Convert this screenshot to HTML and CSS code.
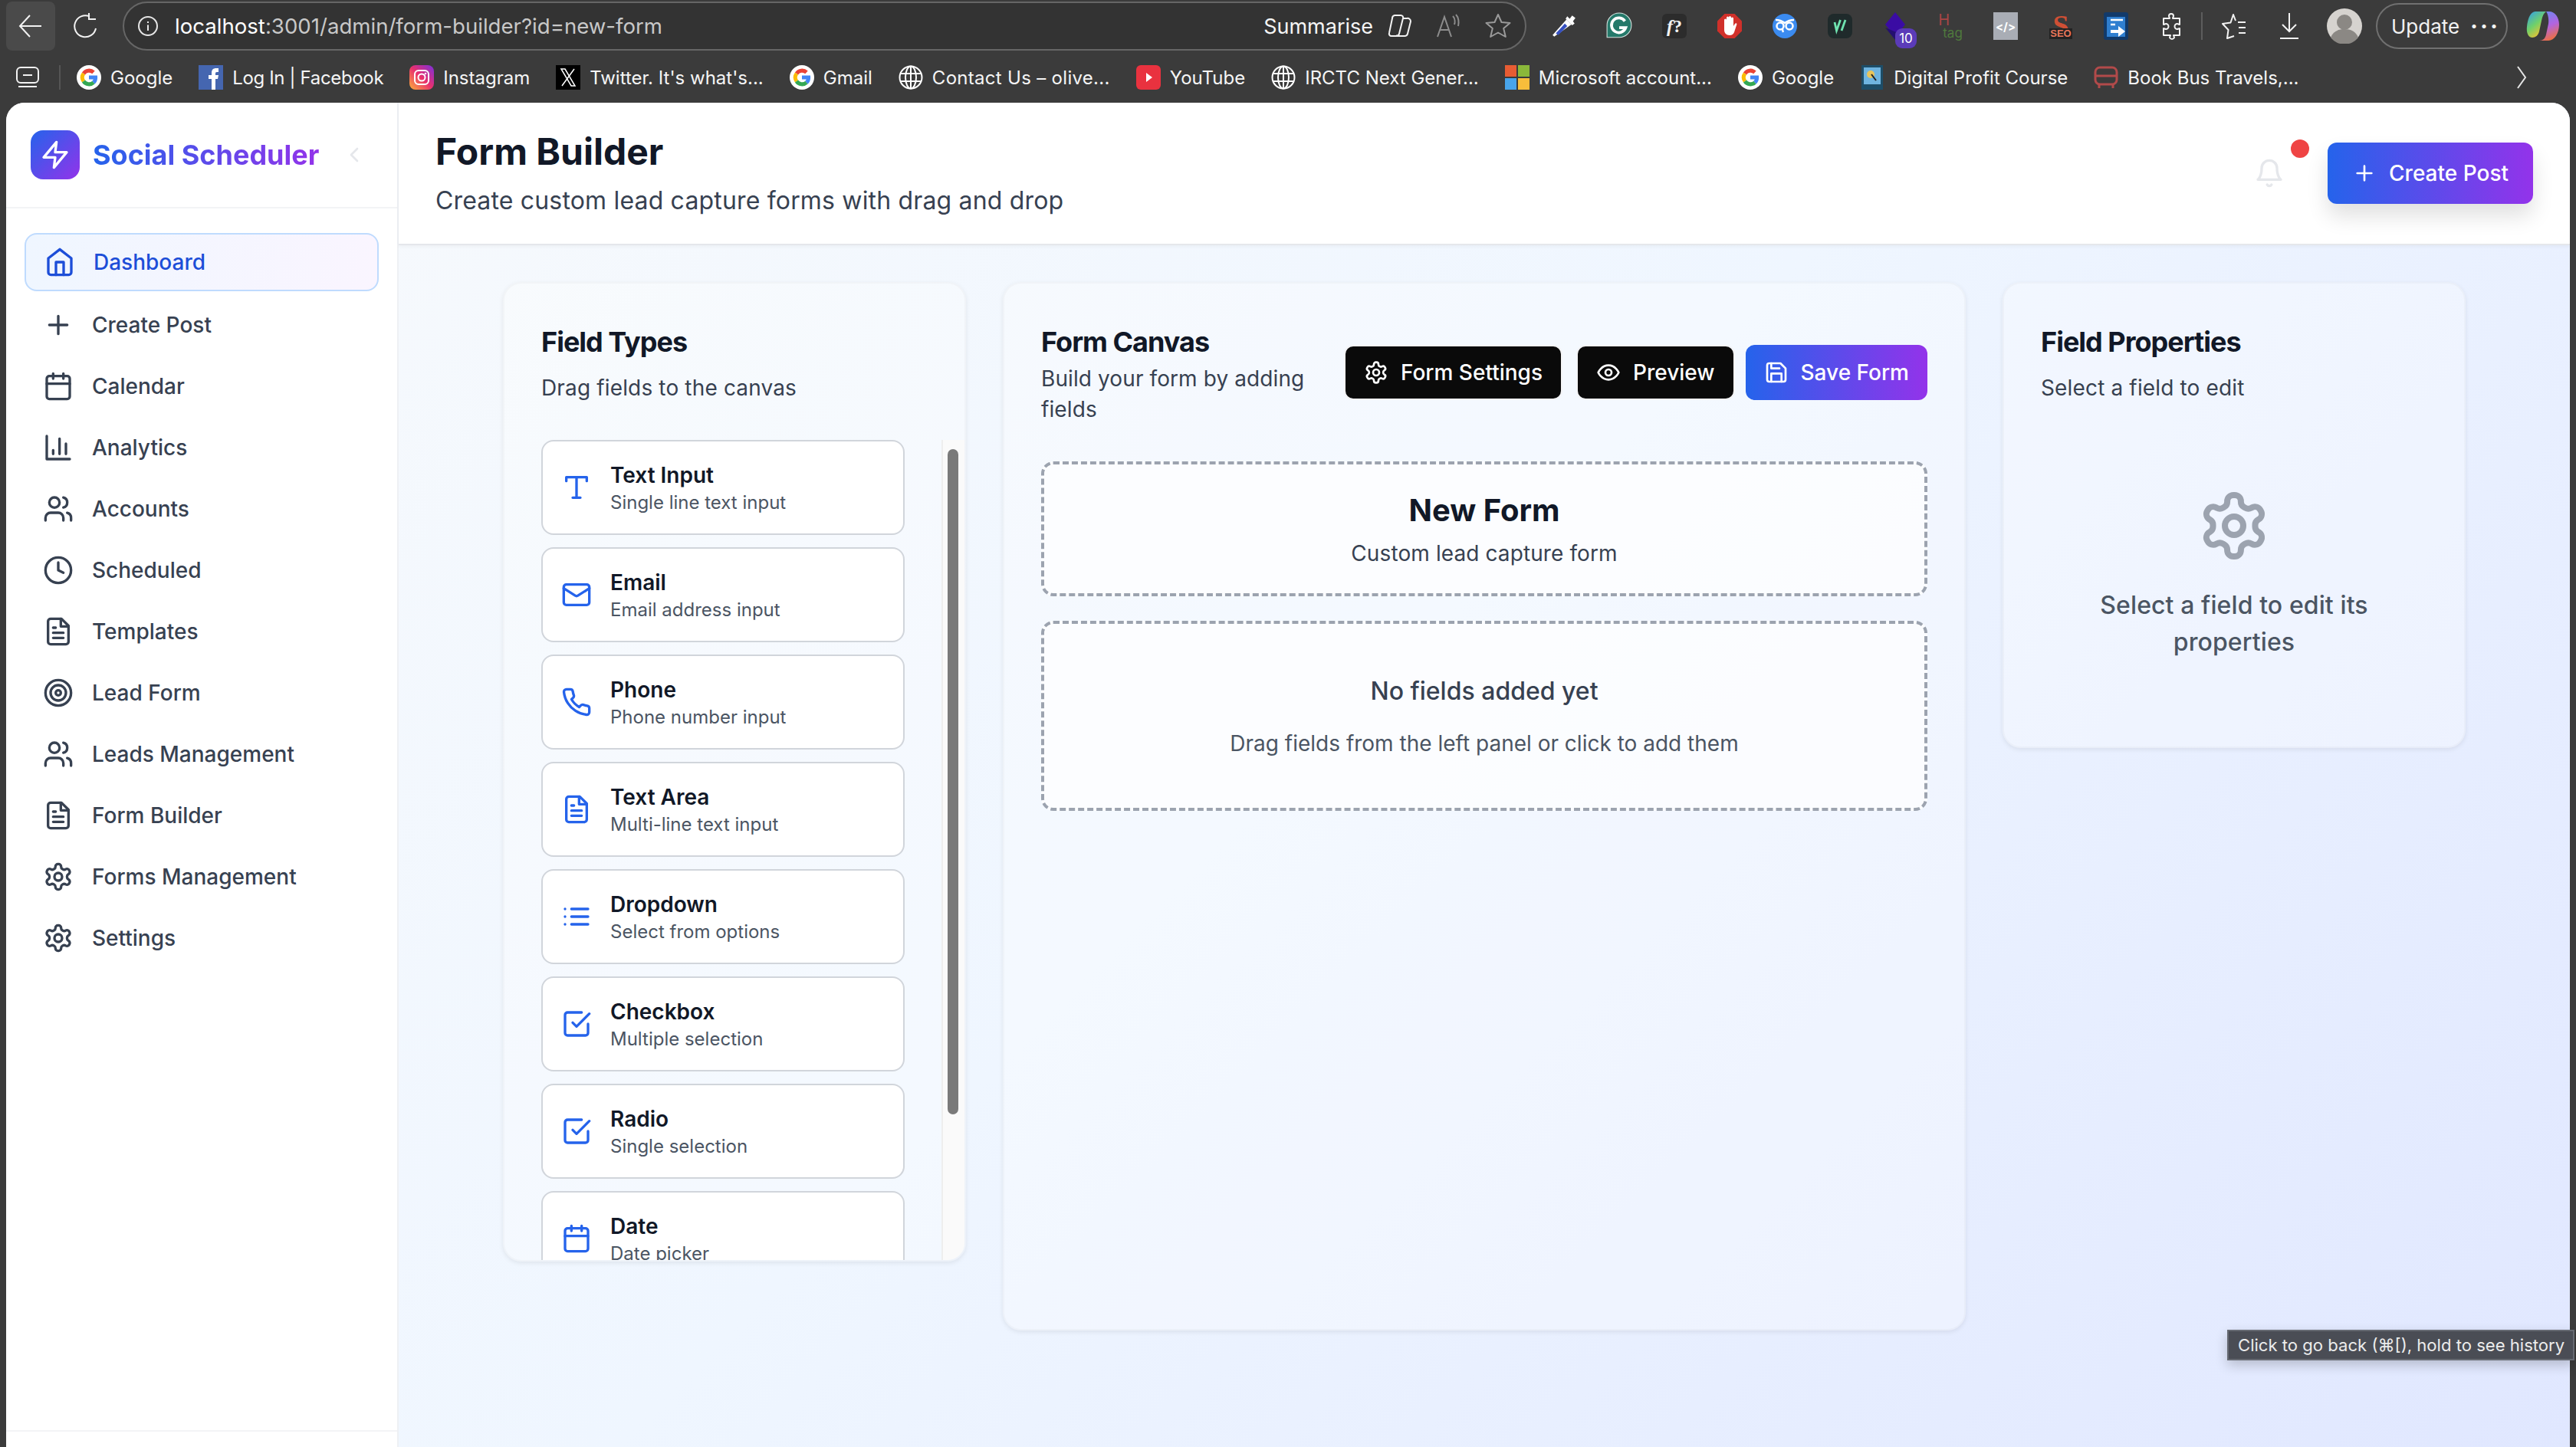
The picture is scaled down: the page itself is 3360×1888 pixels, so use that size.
FILE: index.html
```html
<!DOCTYPE html>
<html lang="en">
<head>
<meta charset="UTF-8">
<title>Form Builder</title>
<link rel="stylesheet" href="styles.css">
</head>
<body>

<svg class="sprite" xmlns="http://www.w3.org/2000/svg">
  <defs>
    <linearGradient id="copilot-a" x1="0" y1="0" x2=".6" y2="1"><stop offset="0" stop-color="#2f9cf0"/><stop offset=".55" stop-color="#6fd06a"/><stop offset="1" stop-color="#f2c230"/></linearGradient>
    <linearGradient id="copilot-b" x1=".3" y1="0" x2=".6" y2="1"><stop offset="0" stop-color="#6f86f0"/><stop offset=".5" stop-color="#b264e0"/><stop offset="1" stop-color="#f0703a"/></linearGradient>
    <linearGradient id="insta" x1="0" y1="1" x2="1" y2="0"><stop offset="0" stop-color="#fdb03a"/><stop offset=".5" stop-color="#e8306e"/><stop offset="1" stop-color="#7a2fe0"/></linearGradient>
  </defs>
  <symbol id="i-home" viewBox="0 0 24 24"><path d="m3 9 9-7 9 7v11a2 2 0 0 1-2 2H5a2 2 0 0 1-2-2z"/><polyline points="9 22 9 12 15 12 15 22"/></symbol>
  <symbol id="i-plus" viewBox="0 0 24 24"><path d="M5 12h14M12 5v14"/></symbol>
  <symbol id="i-calendar" viewBox="0 0 24 24"><rect x="3" y="4" width="18" height="18" rx="2"/><path d="M16 2v4M8 2v4M3 10h18"/></symbol>
  <symbol id="i-chart" viewBox="0 0 24 24"><path d="M3 3v18h18M18 17V9M13 17V5M8 17v-3"/></symbol>
  <symbol id="i-users" viewBox="0 0 24 24"><path d="M16 21v-2a4 4 0 0 0-4-4H6a4 4 0 0 0-4 4v2"/><circle cx="9" cy="7" r="4"/><path d="M22 21v-2a4 4 0 0 0-3-3.87M16 3.13a4 4 0 0 1 0 7.75"/></symbol>
  <symbol id="i-clock" viewBox="0 0 24 24"><circle cx="12" cy="12" r="10"/><polyline points="12 6 12 12 16 14"/></symbol>
  <symbol id="i-file" viewBox="0 0 24 24"><path d="M14.5 2H6a2 2 0 0 0-2 2v16a2 2 0 0 0 2 2h12a2 2 0 0 0 2-2V7.5L14.5 2z"/><polyline points="14 2 14 8 20 8"/><path d="M16 13H8M16 17H8M10 9H8"/></symbol>
  <symbol id="i-target" viewBox="0 0 24 24"><circle cx="12" cy="12" r="10"/><circle cx="12" cy="12" r="6"/><circle cx="12" cy="12" r="2"/></symbol>
  <symbol id="i-gear" viewBox="0 0 24 24"><path d="M12.22 2h-.44a2 2 0 0 0-2 2v.18a2 2 0 0 1-1 1.73l-.43.25a2 2 0 0 1-2 0l-.15-.08a2 2 0 0 0-2.73.73l-.22.38a2 2 0 0 0 .73 2.73l.15.1a2 2 0 0 1 1 1.72v.51a2 2 0 0 1-1 1.74l-.15.09a2 2 0 0 0-.73 2.73l.22.38a2 2 0 0 0 2.73.73l.15-.08a2 2 0 0 1 2 0l.43.25a2 2 0 0 1 1 1.73V20a2 2 0 0 0 2 2h.44a2 2 0 0 0 2-2v-.18a2 2 0 0 1 1-1.73l.43-.25a2 2 0 0 1 2 0l.15.08a2 2 0 0 0 2.73-.73l.22-.39a2 2 0 0 0-.73-2.73l-.15-.08a2 2 0 0 1-1-1.74v-.5a2 2 0 0 1 1-1.74l.15-.09a2 2 0 0 0 .73-2.73l-.22-.38a2 2 0 0 0-2.73-.73l-.15.08a2 2 0 0 1-2 0l-.43-.25a2 2 0 0 1-1-1.73V4a2 2 0 0 0-2-2z"/><circle cx="12" cy="12" r="3"/></symbol>
  <symbol id="i-type" viewBox="0 0 24 24"><path d="M4 7V4h16v3M9 20h6M12 4v16"/></symbol>
  <symbol id="i-mail" viewBox="0 0 24 24"><rect x="2" y="4" width="20" height="16" rx="2"/><path d="m22 7-8.97 5.7a1.94 1.94 0 0 1-2.06 0L2 7"/></symbol>
  <symbol id="i-phone" viewBox="0 0 24 24"><path d="M22 16.92v3a2 2 0 0 1-2.18 2 19.79 19.79 0 0 1-8.63-3.07 19.5 19.5 0 0 1-6-6 19.79 19.79 0 0 1-3.07-8.67A2 2 0 0 1 4.11 2h3a2 2 0 0 1 2 1.72 12.84 12.84 0 0 0 .7 2.81 2 2 0 0 1-.45 2.11L8.09 9.91a16 16 0 0 0 6 6l1.27-1.27a2 2 0 0 1 2.11-.45 12.84 12.84 0 0 0 2.81.7A2 2 0 0 1 22 16.92z"/></symbol>
  <symbol id="i-list" viewBox="0 0 24 24"><path d="M8 6h13M8 12h13M8 18h13M3 6h.01M3 12h.01M3 18h.01"/></symbol>
  <symbol id="i-check" viewBox="0 0 24 24"><polyline points="9 11 12 14 22 4"/><path d="M21 12v7a2 2 0 0 1-2 2H5a2 2 0 0 1-2-2V5a2 2 0 0 1 2-2h11"/></symbol>
  <symbol id="i-eye" viewBox="0 0 24 24"><path d="M2 12s3-7 10-7 10 7 10 7-3 7-10 7-10-7-10-7Z"/><circle cx="12" cy="12" r="3"/></symbol>
  <symbol id="i-save" viewBox="0 0 24 24"><path d="M19 21H5a2 2 0 0 1-2-2V5a2 2 0 0 1 2-2h11l5 5v11a2 2 0 0 1-2 2z"/><polyline points="17 21 17 13 7 13 7 21"/><polyline points="7 3 7 8 15 8"/></symbol>
  <symbol id="i-bell" viewBox="0 0 24 24"><path d="M6 8a6 6 0 0 1 12 0c0 7 3 9 3 9H3s3-2 3-9"/><path d="M10.3 21a1.94 1.94 0 0 0 3.4 0"/></symbol>
  <symbol id="i-zap" viewBox="0 0 24 24"><polygon points="13 2 3 14 12 14 11 22 21 10 12 10 13 2"/></symbol>
  <symbol id="i-chevron" viewBox="0 0 24 24"><path d="m15 18-6-6 6-6"/></symbol>

  <symbol id="fav-google" viewBox="0 0 32 32">
    <circle cx="16" cy="16" r="16" fill="#fff"/>
    <g fill="none" stroke-width="5">
      <path stroke="#ea4335" d="M9 11a8.6 8.6 0 0 1 13-1.6"/>
      <path stroke="#fbbc05" d="M9 11a8.6 8.6 0 0 0 0 10"/>
      <path stroke="#34a853" d="M9 21a8.6 8.6 0 0 0 13 1.6"/>
      <path stroke="#4285f4" d="M22 22.6a8.6 8.6 0 0 0 2.6-6.6H16"/>
    </g>
  </symbol>
  <symbol id="fav-globe" viewBox="0 0 32 32">
    <g fill="none" stroke="#fff" stroke-width="2">
      <circle cx="16" cy="16" r="14.5"/><ellipse cx="16" cy="16" rx="7" ry="14.5"/>
      <path d="M16 1.5v29M2 11h28M2 21h28"/>
    </g>
  </symbol>
</svg>

<header class="chrome">
  <div class="toolbar">
    <button class="back-btn" type="button">
      <svg width="36" height="36" viewBox="0 0 36 36" fill="none" stroke="#f2f2f2" stroke-width="2"><path d="M32 18H4M17 4 4 18l13 14"/></svg>
    </button>
    <div class="reload">
      <svg width="34" height="36" viewBox="0 0 34 36" fill="none" stroke="#f2f2f2" stroke-width="2"><path d="M30 21A14 14 0 1 1 22 5.500"/><path d="M21 1v8h9"/></svg>
    </div>
    <div class="address">
      <svg class="addr-info" width="26" height="26" viewBox="0 0 26 26" fill="none" stroke="#e6e6e6" stroke-width="2"><circle cx="13" cy="13" r="12"/><path d="M13 11.500V19M13 7v2"/></svg>
      <span class="url"><b>localhost</b>:3001/admin/form-builder?id=new-form</span>
      <span class="summarise">Summarise</span>
      <svg class="addr-ico" width="32" height="32" viewBox="0 0 32 32" fill="none" stroke="#f2f2f2" stroke-width="2" stroke-linejoin="round"><path d="M9 2h8a3 3 0 0 1 3 4l-5 20a4 4 0 0 1-4 3H5a3 3 0 0 1-3-4L6 6a4 4 0 0 1 3-4z"/><path d="M20 6h5a4 4 0 0 1 5 4l-4 16a4 4 0 0 1-4 3h-8a4 4 0 0 1-3-1"/></svg>
      <svg class="addr-ico addr-read" width="32" height="32" viewBox="0 0 32 32" fill="none" stroke="#8d8d8d" stroke-width="2"><path d="M2 30 11 4l9 26M5 21h12"/><path d="M22 3c3 3 3 8 2 11M26 1c4 4 4 11 3 15"/></svg>
      <svg class="addr-ico addr-star" width="34" height="34" viewBox="0 0 34 34" fill="none" stroke="#9a9a9a" stroke-width="2" stroke-linejoin="round"><path d="m17 2 4.500 10 11 1-8.300 7 2.600 11L17 25.500 7.200 31l2.600-11-8.300-7 11-1z"/></svg>
    </div>

    <div class="extensions">
      <div class="ext"><svg width="34" height="34" viewBox="0 0 32 32"><path d="M4 29 2 27 19 8l6 6z" fill="#fff"/><path d="M6 25 17 13l3 3L9 27z" fill="#3550c0"/><path d="m20 4 3 3 3-4 4 3-3 4 2 3-3 2-8-8z" fill="#fff"/></svg></div>
      <div class="ext"><svg width="34" height="36" viewBox="0 0 32 34"><path d="M16 1a15 15 0 0 1 0 30H1V16A15 15 0 0 1 16 1z" fill="#25796a" stroke="#d8e6e2"/><path d="M23 11a9 9 0 1 0 1 8h-8" fill="none" stroke="#fff" stroke-width="3.500"/></svg></div>
      <div class="ext"><span class="ext-f"><i>f</i>?</span></div>
      <div class="ext"><svg width="32" height="34" viewBox="0 0 32 32"><path d="M9.500 0h13L32 9.500v13L22.500 32h-13L0 22.500v-13z" fill="#d0302a"/><path d="M9 15V8a1.500 1.500 0 0 1 3 0V5a1.500 1.500 0 0 1 3 0V4.500a1.500 1.500 0 0 1 3 0V6a1.500 1.500 0 0 1 3 0v10l2-3c1-1.500 3-.5 2.300 1L22 24c-1 2.500-3 4-6 4-4.500 0-7-3-7-7z" fill="#fff"/></svg></div>
      <div class="ext"><svg width="32" height="34" viewBox="0 0 32 32"><circle cx="16" cy="16" r="16" fill="#3b8bf0"/><g fill="none" stroke="#fff" stroke-width="2.500"><circle cx="10" cy="16" r="4.500"/><circle cx="22" cy="16" r="4.500"/><path d="M4 8c4 0 8 1 12 4 4-3 8-4 12-4M14 24c-1-2-1-3-1-4"/></g></svg></div>
      <div class="ext"><svg width="32" height="32" viewBox="0 0 32 32"><rect width="32" height="32" rx="8" fill="#1f2a2b"/><path d="m9 11 2.500 11 5-14M18 22l5-14" fill="none" stroke="#6fe3b0" stroke-width="2.800"/></svg></div>
      <div class="ext">
        <svg width="32" height="36" viewBox="0 0 32 36"><path d="m16 0 13 16-13 16L3 16z" fill="#3a0ca3"/><path d="m3 20 13 16 6-8z" fill="#241070"/></svg>
        <span class="badge">10</span>
      </div>
      <div class="ext"><span class="ext-htag"><u>H</u><em>tag</em></span></div>
      <div class="ext"><span class="ext-code">&lt;/&gt;</span></div>
      <div class="ext"><span class="ext-seo"><u>S</u><small>SEO</small></span></div>
      <div class="ext"><svg width="32" height="36" viewBox="0 0 32 36"><rect width="32" height="36" rx="3" fill="#123a6a"/><rect x="4" y="6" width="24" height="26" fill="#2f7fd0"/><path d="M9 10h16M9 16h6" stroke="#fff" stroke-width="2.500"/><path d="M9 23h10v-5l9 7-9 7v-5H9z" fill="#fff"/></svg></div>
      <div class="ext"><svg width="32" height="38" viewBox="0 0 32 38" fill="none" stroke="#f2f2f2" stroke-width="2" stroke-linejoin="round"><path d="M13 6a3 3 0 0 1 6 0c0 1-1 2-1 3h9v8c-1 0-2-1-3-1a3.500 3.500 0 0 0 0 7c1 0 2-1 3-1v9h-8c0 1 1 1.500 1 3a3.200 3.200 0 0 1-6 0c0-1.500 1-2 1-3H6v-9c1 0 2 1 3 1a3.500 3.500 0 0 0 0-7c-1 0-2 1-3 1V9h8c0-1-1-2-1-3z"/></svg></div>
      <span class="ext-divider"></span>
      <div class="ext"><svg width="34" height="34" viewBox="0 0 34 34" fill="none" stroke="#f2f2f2" stroke-width="2" stroke-linejoin="round"><path d="M17 30 8 33l1.500-11L2 14l10.500-1.500L16 2l3 8"/><path d="M22 12h10M23 19h9M23 26h9"/></svg></div>
      <div class="ext"><svg width="26" height="36" viewBox="0 0 26 36" fill="none" stroke="#f2f2f2" stroke-width="2"><path d="M13 1v24M4 16l9 9 9-9M1 34h24"/></svg></div>
      <div class="ext"><svg width="46" height="46" viewBox="0 0 46 46"><circle cx="23" cy="23" r="23" fill="#d6d3cf"/><circle cx="23" cy="18" r="10" fill="#8b8884"/><path d="M5 38c3-8 10-11 18-11s15 3 18 11a23 23 0 0 1-36 0z" fill="#8b8884"/></svg></div>
      <div class="update-pill"><span>Update</span><span class="dots">&middot;&middot;&middot;</span></div>
      <div class="ext ext-copilot"><svg width="44" height="42" viewBox="0 0 44 40"><path d="M26 1h4c7 0 13 7 13 17 0 11-6 21-14 21H17c5 0 8-3 9-8l3-14c1-6-1-14-3-16z" fill="url(#copilot-b)"/><path d="M12 1h14c-3 2-5 6-6 12l-3 14c-1 5-5 8-9 8-5 0-8-6-7-14C2 10 6 1 12 1z" fill="url(#copilot-a)"/></svg></div>
    </div>
  </div>

  <div class="bookmarks">
    <svg class="bm-all" width="32" height="30" viewBox="0 0 32 30" fill="none" stroke="#f2f2f2" stroke-width="2"><rect x="2" y="2" width="28" height="20" rx="5"/><path d="M10 12h12M4 27h24"/></svg>
    <span class="bm-divider"></span>
    <a class="bm"><svg class="bm-ico"><use href="#fav-google"/></svg>Google</a>
    <a class="bm bm-tight"><svg class="bm-ico" viewBox="0 0 32 32"><rect width="32" height="32" fill="#4566b0"/><path d="M17 32V18h-4v-5h4v-3c0-4 2-6 6-6h3v5h-2c-2 0-2 1-2 2v2h4l-1 5h-3v14z" fill="#fff"/></svg>Log In | Facebook</a>
    <a class="bm"><svg class="bm-ico" viewBox="0 0 32 32"><rect width="32" height="32" rx="8" fill="url(#insta)"/><rect x="7" y="7" width="18" height="18" rx="5" fill="none" stroke="#fff" stroke-width="2"/><circle cx="16" cy="16" r="4.500" fill="none" stroke="#fff" stroke-width="2"/><circle cx="21" cy="11" r="1.300" fill="#fff"/></svg>Instagram</a>
    <a class="bm"><svg class="bm-ico" viewBox="0 0 32 32"><rect width="32" height="32" fill="#000"/><path d="M7 5h5l13 22h-5zM24 5 8 27" fill="none" stroke="#fff" stroke-width="1.500"/></svg>Twitter. It's what's...</a>
    <a class="bm"><svg class="bm-ico"><use href="#fav-google"/></svg>Gmail</a>
    <a class="bm bm-loose"><svg class="bm-ico"><use href="#fav-globe"/></svg>Contact Us – olive...</a>
    <a class="bm"><svg class="bm-ico" viewBox="0 0 32 32"><rect width="32" height="32" rx="6" fill="#e9323f"/><path d="m13 10 8 6-8 6z" fill="#fff"/></svg>YouTube</a>
    <a class="bm"><svg class="bm-ico"><use href="#fav-globe"/></svg>IRCTC Next Gener...</a>
    <a class="bm"><svg class="bm-ico" viewBox="0 0 32 32"><rect width="15" height="15" fill="#e75c33"/><rect x="17" width="15" height="15" fill="#8ab83a"/><rect y="17" width="15" height="15" fill="#48a4ea"/><rect x="17" y="17" width="15" height="15" fill="#f8bd3b"/></svg>Microsoft account...</a>
    <a class="bm"><svg class="bm-ico"><use href="#fav-google"/></svg>Google</a>
    <a class="bm"><svg class="bm-ico" viewBox="0 0 32 32"><rect x="2" width="28" height="32" fill="#1d4d68"/><rect x="5" y="3" width="22" height="22" fill="#6fb4e0"/><circle cx="14" cy="12" r="5" fill="#e8c45a"/><path d="M15 12l6 8" stroke="#222" stroke-width="2"/></svg>Digital Profit Course</a>
    <a class="bm"><svg class="bm-ico" viewBox="0 0 32 32" fill="none" stroke="#b24a4a" stroke-width="3"><rect x="2" y="3" width="28" height="22" rx="6"/><path d="M2 14h28M7 25v5M25 25v5"/></svg>Book Bus Travels,...</a>
    <svg class="bm-more" width="14" height="32" viewBox="0 0 14 32" fill="none" stroke="#e6e6e6" stroke-width="2"><path d="m2 2 10 14L2 30"/></svg>
  </div>
</header>

<div class="window">
  <aside class="sidebar">
    <div class="sidebar-head">
      <div class="logo"><svg class="icon logo-zap"><use href="#i-zap"/></svg></div>
      <span class="brand">Social Scheduler</span>
      <svg class="icon collapse"><use href="#i-chevron"/></svg>
    </div>
    <nav class="nav">
      <a class="nav-item active"><svg class="icon"><use href="#i-home"/></svg>Dashboard</a>
      <a class="nav-item"><svg class="icon"><use href="#i-plus"/></svg>Create Post</a>
      <a class="nav-item"><svg class="icon"><use href="#i-calendar"/></svg>Calendar</a>
      <a class="nav-item"><svg class="icon"><use href="#i-chart"/></svg>Analytics</a>
      <a class="nav-item"><svg class="icon"><use href="#i-users"/></svg>Accounts</a>
      <a class="nav-item"><svg class="icon"><use href="#i-clock"/></svg>Scheduled</a>
      <a class="nav-item"><svg class="icon"><use href="#i-file"/></svg>Templates</a>
      <a class="nav-item"><svg class="icon"><use href="#i-target"/></svg>Lead Form</a>
      <a class="nav-item"><svg class="icon"><use href="#i-users"/></svg>Leads Management</a>
      <a class="nav-item"><svg class="icon"><use href="#i-file"/></svg>Form Builder</a>
      <a class="nav-item"><svg class="icon"><use href="#i-gear"/></svg>Forms Management</a>
      <a class="nav-item"><svg class="icon"><use href="#i-gear"/></svg>Settings</a>
    </nav>
    <div class="sidebar-foot"></div>
  </aside>

  <main class="main">
    <div class="page-head">
      <div>
        <h1>Form Builder</h1>
        <p>Create custom lead capture forms with drag and drop</p>
      </div>
      <div class="head-actions">
        <div class="bell">
          <svg class="icon"><use href="#i-bell"/></svg>
          <span class="bell-dot"></span>
        </div>
        <button class="btn btn-create" type="button"><svg class="icon btn-ico"><use href="#i-plus"/></svg>Create Post</button>
      </div>
    </div>

    <div class="content">
      <section class="card card-types">
        <h2>Field Types</h2>
        <p class="card-sub">Drag fields to the canvas</p>
        <div class="field-wrap">
          <div class="field-list">
            <div class="field"><svg class="icon"><use href="#i-type"/></svg><div><strong>Text Input</strong><span>Single line text input</span></div></div>
            <div class="field"><svg class="icon"><use href="#i-mail"/></svg><div><strong>Email</strong><span>Email address input</span></div></div>
            <div class="field"><svg class="icon"><use href="#i-phone"/></svg><div><strong>Phone</strong><span>Phone number input</span></div></div>
            <div class="field"><svg class="icon"><use href="#i-file"/></svg><div><strong>Text Area</strong><span>Multi-line text input</span></div></div>
            <div class="field"><svg class="icon"><use href="#i-list"/></svg><div><strong>Dropdown</strong><span>Select from options</span></div></div>
            <div class="field"><svg class="icon"><use href="#i-check"/></svg><div><strong>Checkbox</strong><span>Multiple selection</span></div></div>
            <div class="field"><svg class="icon"><use href="#i-check"/></svg><div><strong>Radio</strong><span>Single selection</span></div></div>
            <div class="field"><svg class="icon"><use href="#i-calendar"/></svg><div><strong>Date</strong><span>Date picker</span></div></div>
          </div>
          <div class="scrollbar"><div class="thumb"></div></div>
        </div>
      </section>

      <section class="card card-canvas">
        <div class="canvas-head">
          <div class="canvas-title">
            <h2>Form Canvas</h2>
            <p>Build your form by adding fields</p>
          </div>
          <div class="canvas-actions">
            <button class="btn btn-dark" type="button"><svg class="icon btn-ico"><use href="#i-gear"/></svg>Form Settings</button>
            <button class="btn btn-dark" type="button"><svg class="icon btn-ico"><use href="#i-eye"/></svg>Preview</button>
            <button class="btn btn-save" type="button"><svg class="icon btn-ico"><use href="#i-save"/></svg>Save Form</button>
          </div>
        </div>
        <div class="dashed form-head">
          <h3>New Form</h3>
          <p>Custom lead capture form</p>
        </div>
        <div class="dashed drop-zone">
          <h4>No fields added yet</h4>
          <p>Drag fields from the left panel or click to add them</p>
        </div>
      </section>

      <section class="card card-props">
        <h2>Field Properties</h2>
        <p class="card-sub">Select a field to edit</p>
        <div class="props-empty">
          <svg class="icon"><use href="#i-gear"/></svg>
          <p>Select a field to edit its properties</p>
        </div>
      </section>
    </div>
  </main>
</div>

<div class="tooltip">Click to go back (⌘[), hold to see history</div>

</body>
</html>
```

FILE: styles.css
```css
* {
	box-sizing: border-box;
}
html, body {
	margin: 0;
	height: 1888px;
	overflow: hidden;
}
body {
	display: flex;
	flex-direction: column;
	background: #3b3b3b;
	font-family: Inter, "Noto Sans", sans-serif;
	color: #111827;
}
h1, h2, h3, h4, p {
	margin: 0;
}
.sprite {
	position: absolute;
	width: 0;
	height: 0;
}
.icon {
	width: 40px;
	height: 40px;
	flex: none;
	fill: none;
	stroke: currentColor;
	stroke-width: 2;
	stroke-linecap: round;
	stroke-linejoin: round;
}

/* browser bars */
.chrome {
	height: 134px;
	flex: none;
	color: #f2f2f2;
}
.toolbar {
	display: flex;
	align-items: center;
	height: 68px;
	padding: 2px 0 2px 8px;
}
.back-btn {
	display: flex;
	align-items: center;
	justify-content: center;
	width: 64px;
	height: 64px;
	padding: 0;
	border: 0;
	border-radius: 8px;
	background: #4a4a4a;
}
.reload {
	display: flex;
	justify-content: center;
	width: 80px;
	margin-right: 8px;
}
.address {
	display: flex;
	align-items: center;
	width: 1831px;
	height: 64px;
	padding: 0 18px 0 18px;
	border: 2px solid #666;
	border-radius: 32px;
	background: #333;
}
.addr-info {
	margin-right: 22px;
}
.url {
	font-size: 27.6px;
	color: #c8c8c8;
	white-space: nowrap;
}
.url b {
	font-weight: 400;
	color: #fff;
}
.summarise {
	margin-left: auto;
	font-size: 27px;
	color: #f5f5f5;
}
.addr-ico {
	margin-left: 19px;
}
.addr-read {
	margin-left: 31px;
}
.addr-star {
	margin-left: 32px;
}
.extensions {
	display: flex;
	align-items: center;
	margin-left: 13px;
}
.ext {
	position: relative;
	display: flex;
	align-items: center;
	justify-content: center;
	width: 72px;
	height: 60px;
}
.ext-f {
	display: flex;
	align-items: center;
	justify-content: center;
	width: 32px;
	height: 32px;
	border-radius: 6px;
	background: #2c2c2c;
	font: 700 24px "Liberation Serif", serif;
}
.ext-htag {
	display: flex;
	flex-direction: column;
}
.ext-htag u {
	font-size: 20px;
	line-height: 18px;
	text-decoration: none;
	color: #a84545;
}
.ext-htag em {
	margin-left: 6px;
	font-style: normal;
	font-size: 17px;
	line-height: 16px;
	color: #4f7a3d;
}
.ext-code {
	display: flex;
	align-items: center;
	justify-content: center;
	width: 32px;
	height: 36px;
	background: #a9adb5;
	color: #fff;
	font-size: 15px;
	font-weight: 700;
}
.ext-seo {
	display: flex;
	flex-direction: column;
	align-items: center;
}
.ext-seo u {
	height: 20px;
	font: 700 38px/32px "Liberation Serif", serif;
	text-decoration: none;
	color: #cf4f34;
}
.ext-seo small {
	padding: 0 1px;
	background: #222;
	color: #e8765a;
	font: 700 13px/14px "Liberation Sans", sans-serif;
}
.badge {
	position: absolute;
	left: 36px;
	top: 33px;
	width: 28px;
	height: 26px;
	border-radius: 9px;
	background: #5b3bb8;
	color: #fff;
	font-size: 17px;
	line-height: 26px;
	text-align: center;
}
.ext-divider {
	width: 2px;
	height: 36px;
	margin: 0 5px 0 3px;
	background: #5d5d5d;
}
.update-pill {
	display: flex;
	align-items: center;
	justify-content: space-between;
	width: 172px;
	height: 60px;
	margin-left: 5px;
	padding: 0 8px 0 18px;
	border: 2px solid #707070;
	border-radius: 30px;
	font-size: 26px;
}
.dots {
	font-size: 30px;
	font-weight: 700;
	letter-spacing: 3px;
}
.ext-copilot {
	margin-left: 10px;
}
.bookmarks {
	display: flex;
	align-items: center;
	gap: 34px;
	height: 66px;
	padding: 0 64px 0 20px;
}
.bm-divider {
	width: 2px;
	height: 32px;
	margin: 0 -13px 0 -9px;
	background: #555;
}
.bm {
	display: flex;
	align-items: center;
	gap: 12px;
	font-size: 24px;
	white-space: nowrap;
	color: #f5f5f5;
}
.bm-tight {
	letter-spacing: -.35px;
}
.bm-loose {
	letter-spacing: .3px;
}
.bm-ico {
	width: 32px;
	height: 32px;
	flex: none;
}
.bm-more {
	margin-left: auto;
}

/* app window */
.window {
	display: flex;
	flex: 1;
	min-height: 0;
	margin: 0 8px;
	border-radius: 24px 24px 0 0;
	overflow: hidden;
	background: linear-gradient(135deg, #f8fafc 0%, #eff6ff 50%, #e0e7ff 100%);
}
.sidebar {
	display: flex;
	flex-direction: column;
	width: 512px;
	flex: none;
	border-right: 2px solid #eef0f4;
	background: #fff;
}
.sidebar-head {
	display: flex;
	align-items: center;
	height: 138px;
	padding: 0 32px;
	border-bottom: 2px solid #f3f4f6;
}
.logo {
	display: flex;
	align-items: center;
	justify-content: center;
	width: 64px;
	height: 64px;
	flex: none;
	border-radius: 16px;
	background: linear-gradient(135deg, #2563eb, #9333ea);
	color: #fff;
}
.brand {
	margin-left: 17px;
	font-size: 36px;
	font-weight: 700;
	white-space: nowrap;
	background: linear-gradient(90deg, #2563eb, #9333ea);
	-webkit-background-clip: text;
	background-clip: text;
	color: transparent;
}
.collapse {
	width: 32px;
	height: 32px;
	margin-left: auto;
	margin-right: 8px;
	color: #e5e7eb;
}
.nav {
	display: flex;
	flex-direction: column;
	flex: 1;
	gap: 8px;
	padding: 32px 24px 0;
}
.nav-item {
	display: flex;
	align-items: center;
	gap: 24px;
	height: 72px;
	padding: 0 24px;
	font-size: 28px;
	font-weight: 500;
	color: #374151;
}
.nav-item.active {
	height: 76px;
	border: 2px solid #bfdbfe;
	border-radius: 16px;
	background: linear-gradient(90deg, #eff6ff, #faf5ff);
	color: #1d4ed8;
}
.sidebar-foot {
	height: 22px;
	border-top: 2px solid #f3f4f6;
}

/* main */
.main {
	flex: 1;
	min-width: 0;
}
.page-head {
	display: flex;
	align-items: center;
	justify-content: space-between;
	height: 186px;
	padding: 0 48px;
	background: #fff;
	border-bottom: 2px solid #e5e7eb;
	box-shadow: 0 2px 4px rgba(0, 0, 0, .04);
}
.page-head h1 {
	font-size: 48px;
	font-weight: 700;
	line-height: 64px;
}
.page-head p {
	margin-top: 8px;
	font-size: 32px;
	line-height: 48px;
	letter-spacing: .17px;
	color: #374151;
}
.head-actions {
	display: flex;
	align-items: center;
}
.bell {
	position: relative;
	width: 40px;
	height: 40px;
	margin-right: 56px;
	color: #e5e7eb;
}
.bell-dot {
	position: absolute;
	left: 48px;
	top: -24px;
	width: 24px;
	height: 24px;
	border-radius: 50%;
	background: #ef4444;
}
.btn {
	display: flex;
	align-items: center;
	gap: 16px;
	height: 72px;
	padding: 0 24px;
	border: 0;
	border-radius: 12px;
	font-family: inherit;
	font-size: 28px;
	font-weight: 500;
	color: #fff;
	white-space: nowrap;
}
.btn-ico {
	width: 32px;
	height: 32px;
}
.btn-create {
	height: 80px;
	padding: 0 32px;
	background: linear-gradient(90deg, #2563eb, #9333ea);
	box-shadow: 0 16px 28px rgba(0, 0, 0, .12);
}
.btn-dark {
	background: #0a0a0a;
	border: 2px solid #f3f4f6;
}
.btn-save {
	margin-left: -4px;
	background: linear-gradient(90deg, #2563eb, #9333ea);
}
.content {
	display: grid;
	grid-template-columns: repeat(4, 1fr);
	gap: 48px;
	align-items: start;
	width: 2560px;
	margin: 0 auto;
	padding-top: 48px;
}
.card {
	padding: 48px 48px 0;
	border: 2px solid rgba(0, 0, 0, .025);
	border-radius: 24px;
	background: rgba(255, 255, 255, .3);
	box-shadow: 0 2px 6px rgba(0, 0, 0, .08);
}
.card h2 {
	font-size: 36px;
	font-weight: 700;
	line-height: 56px;
	letter-spacing: -1px;
}
.card-sub {
	margin-top: 12px;
	font-size: 28px;
	line-height: 40px;
	letter-spacing: .15px;
	color: #374151;
}
.card-types {
	height: 1278px;
	padding-right: 0;
	overflow: hidden;
}
.field-wrap {
	display: flex;
	height: 1070px;
	margin-top: 48px;
}
.field-list {
	display: flex;
	flex: 1;
	flex-direction: column;
	gap: 16px;
	padding-right: 48px;
	overflow: hidden;
}
.field {
	display: flex;
	align-items: center;
	gap: 24px;
	flex: none;
	height: 124px;
	padding: 0 24px;
	border: 2px solid #d1d5db;
	border-radius: 16px;
	background: #fff;
	color: #2563eb;
}
.field strong {
	display: block;
	font-size: 28px;
	font-weight: 600;
	line-height: 40px;
	color: #111827;
}
.field span {
	display: block;
	font-size: 24px;
	line-height: 32px;
	color: #4b5563;
}
.scrollbar {
	width: 30px;
	flex: none;
	padding: 12px 0 0 6px;
	border-left: 2px solid #eeeeee;
	background: #fafafa;
}
.thumb {
	width: 14px;
	height: 868px;
	border-radius: 7px;
	background: #7a7a7a;
}
.card-canvas {
	grid-column: span 2;
	height: 1368px;
}
.canvas-head {
	display: flex;
	align-items: center;
	justify-content: space-between;
	gap: 24px;
	margin-bottom: 48px;
}
.canvas-title p {
	font-size: 28px;
	line-height: 40px;
	letter-spacing: .1px;
	color: #374151;
}
.canvas-actions {
	display: flex;
	flex: none;
	gap: 18px;
}
.dashed {
	border: 4px dashed #9ca3af;
	border-radius: 16px;
	background: rgba(255, 255, 255, .7);
	text-align: center;
}
.dashed p {
	font-size: 28px;
	line-height: 40px;
	color: #4b5563;
}
.form-head {
	height: 176px;
	padding-top: 32px;
	margin-bottom: 32px;
}
.form-head h3 {
	font-size: 40px;
	font-weight: 700;
	line-height: 56px;
}
.form-head p {
	margin-top: 8px;
	letter-spacing: .1px;
	color: #374151;
}
.drop-zone {
	height: 248px;
	padding-top: 64px;
}
.drop-zone h4 {
	font-size: 32px;
	font-weight: 500;
	line-height: 48px;
	color: #374151;
}
.drop-zone p {
	margin-top: 24px;
}
.card-props {
	height: 608px;
}
.props-empty {
	padding-top: 112px;
	text-align: center;
	color: #9ca3af;
}
.props-empty .icon {
	display: block;
	width: 96px;
	height: 96px;
	margin: 0 auto;
}
.props-empty p {
	margin-top: 32px;
	font-size: 32px;
	font-weight: 500;
	line-height: 48px;
	letter-spacing: .1px;
	color: #4b5563;
}

/* native tooltip over the page */
.tooltip {
	position: absolute;
	left: 2905px;
	top: 1735px;
	width: 453px;
	height: 40px;
	padding: 0 10px 0 12px;
	border: 2px solid #666a72;
	background: #4a4d55;
	box-shadow: 0 6px 16px rgba(0, 0, 0, .2);
	color: #ececec;
	font-size: 22.1px;
	line-height: 36px;
	white-space: nowrap;
}
```
